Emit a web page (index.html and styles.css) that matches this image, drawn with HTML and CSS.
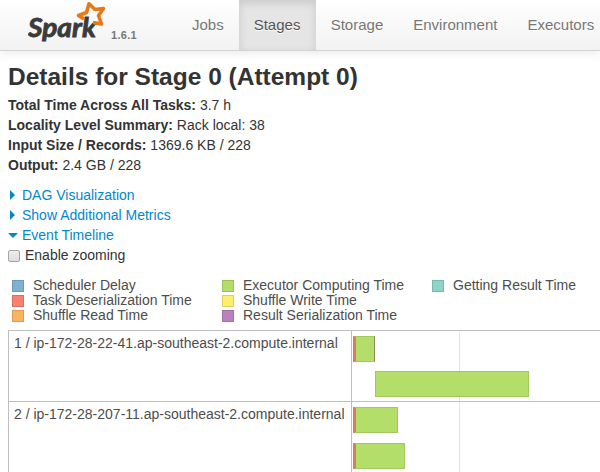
FILE: index.html
```html
<!DOCTYPE html>
<html lang="en">
<head>
<meta charset="utf-8">
<title>Details for Stage 0 (Attempt 0)</title>
<link rel="stylesheet" href="styles.css">
</head>
<body>
<header class="navbar">
  <a class="brand">
    <svg class="logo" width="82" height="46" viewBox="0 0 82 46">
      <text class="wordmark" x="0" y="37" textLength="68" lengthAdjust="spacingAndGlyphs">Spark</text>
      <path class="star" d="M56 19 L50.500 15.500 L58.500 12.500 L61 3.800 L67 9.500 L75.500 8.500 L70.500 15.500 L73.500 24 L65 22.500"/>
    </svg>
    <span class="version">1.6.1</span>
  </a>
  <nav class="tabs">
    <a>Jobs</a><a class="active">Stages</a><a>Storage</a><a>Environment</a><a>Executors</a>
  </nav>
</header>
<main>
  <h3>Details for Stage 0 (Attempt 0)</h3>
  <ul class="summary">
    <li><strong>Total Time Across All Tasks:</strong> 3.7 h</li>
    <li><strong>Locality Level Summary:</strong> Rack local: 38</li>
    <li><strong>Input Size / Records:</strong> 1369.6 KB / 228</li>
    <li><strong>Output:</strong> 2.4 GB / 228</li>
  </ul>
  <div class="toggles">
    <a><i class="arrow closed"></i>DAG Visualization</a>
    <a><i class="arrow closed"></i>Show Additional Metrics</a>
    <a><i class="arrow open"></i>Event Timeline</a>
  </div>
  <label class="zooming"><input type="checkbox"><span>Enable zooming</span></label>
  <div class="legend">
    <span><i class="scheduler"></i>Scheduler Delay</span>
    <span><i class="deserialization"></i>Task Deserialization Time</span>
    <span><i class="read"></i>Shuffle Read Time</span>
    <span><i class="computing"></i>Executor Computing Time</span>
    <span><i class="write"></i>Shuffle Write Time</span>
    <span><i class="serialization"></i>Result Serialization Time</span>
    <span><i class="getting"></i>Getting Result Time</span>
  </div>
  <section class="timeline">
    <div class="group">
      <div class="host">1 / ip-172-28-22-41.ap-southeast-2.compute.internal</div>
      <div class="tasks">
        <div class="task first end" style="width:22px"></div>
        <div class="task" style="width:154px;margin-left:22px"></div>
      </div>
    </div>
    <div class="group">
      <div class="host">2 / ip-172-28-207-11.ap-southeast-2.compute.internal</div>
      <div class="tasks spaced">
        <div class="task first" style="width:45px"></div>
        <div class="task first" style="width:52px"></div>
      </div>
    </div>
  </section>
</main>
</body>
</html>
```
FILE: styles.css
```css
* { box-sizing: border-box; }
body {
  margin: 0;
  height: 472px;
  overflow: hidden;
  background: #fff;
  color: #333;
  font: 14px/20px "Liberation Sans", Arial, sans-serif;
}
.navbar {
  display: flex;
  height: 51px;
  border-bottom: 1px solid #d4d4d4;
  background: linear-gradient(#fff, #f2f2f2);
  box-shadow: 0 1px 10px rgba(0, 0, 0, .1);
}
.brand { display: flex; width: 177px; padding-left: 28px; flex: none; }
.logo { flex: none; }
.wordmark {
  font: italic 700 26px Lato, sans-serif;
  fill: #3c3a3a;
  stroke: #3c3a3a;
  stroke-width: .8;
}
.star { fill: none; stroke: #e87817; stroke-width: 3.6; stroke-linejoin: round; }
.version { padding-top: 25px; margin-left: 1px; font-size: 11px; font-weight: bold; color: #777; letter-spacing: .3px; }
.tabs { display: flex; white-space: nowrap; }
.tabs a {
  padding: 15px 15px;
  font-size: 15px;
  color: #777;
  text-shadow: 0 1px 0 #fff;
}
.tabs a:last-child { padding-right: 0; }
.tabs .active { width: 77px; color: #555; background: #e5e5e5; box-shadow: inset 0 3px 8px rgba(0, 0, 0, .125); }
main { padding: 6px 0 0 8px; }
h3 { margin: 0; font-size: 24.500px; line-height: 40px; height: 38px; }
ul { margin: 0; padding: 0; list-style: none; }
.toggles { padding-top: 10px; }
.toggles a { display: flex; align-items: center; color: #08c; }
.arrow { width: 14px; height: 10px; flex: none; }
.arrow::before { content: ""; display: block; width: 0; height: 0; }
.closed::before { margin-left: 2px; border: 5px solid transparent; border-left: 5px solid #08c; border-right: 0; }
.open::before { margin: 3px 0 0; border: 5px solid transparent; border-top: 5px solid #08c; border-bottom: 0; }
.zooming { display: flex; }
.zooming input {
  appearance: none;
  width: 12px;
  height: 12px;
  margin: 5px 5px 0 0;
  border: 1px solid #a5a5a5;
  border-radius: 2px;
  background: linear-gradient(#eee, #dedede);
}
.legend {
  display: grid;
  grid-template: repeat(3, 15px) / 210px 210px 1fr;
  grid-auto-flow: column;
  margin-top: 13px;
  padding-left: 4px;
  line-height: 15px;
  color: #4d4d4d;
}
.legend span { display: flex; align-items: center; white-space: nowrap; }
.legend i { width: 12px; height: 12px; margin-right: 9px; border: 1px solid rgba(0, 0, 0, .13); }
.scheduler { background: #80b1d3; }
.deserialization { background: #fb8072; }
.read { background: #fdb462; }
.computing { background: #b3de69; }
.write { background: #ffed6f; }
.serialization { background: #bc80bd; }
.getting { background: #8dd3c7; }
.timeline { margin-top: 7px; border: 1px solid #bfbfbf; border-width: 1px 0 0 1px; color: #4d4d4d; }
.group { display: flex; height: 71px; border-bottom: 1px solid #bfbfbf; }
.group:last-child { border-bottom: 0; }
.host { width: 343px; flex: none; padding: 2px 5px; border-right: 1px solid #bfbfbf; white-space: nowrap; }
.tasks {
  flex: 1;
  display: flex;
  flex-direction: column;
  gap: 9px;
  padding: 5px 0 0 1px;
  background: linear-gradient(#e5e5e5, #e5e5e5) 107px 0 / 1px 100% no-repeat;
}
.spaced { gap: 10px; }
.task { height: 26px; flex: none; border: 1px solid #a1c75e; background: #b3de69; }
.first { border-left: 3px solid #dc7b60; }
.end { border-right-color: #95895b; }
```
